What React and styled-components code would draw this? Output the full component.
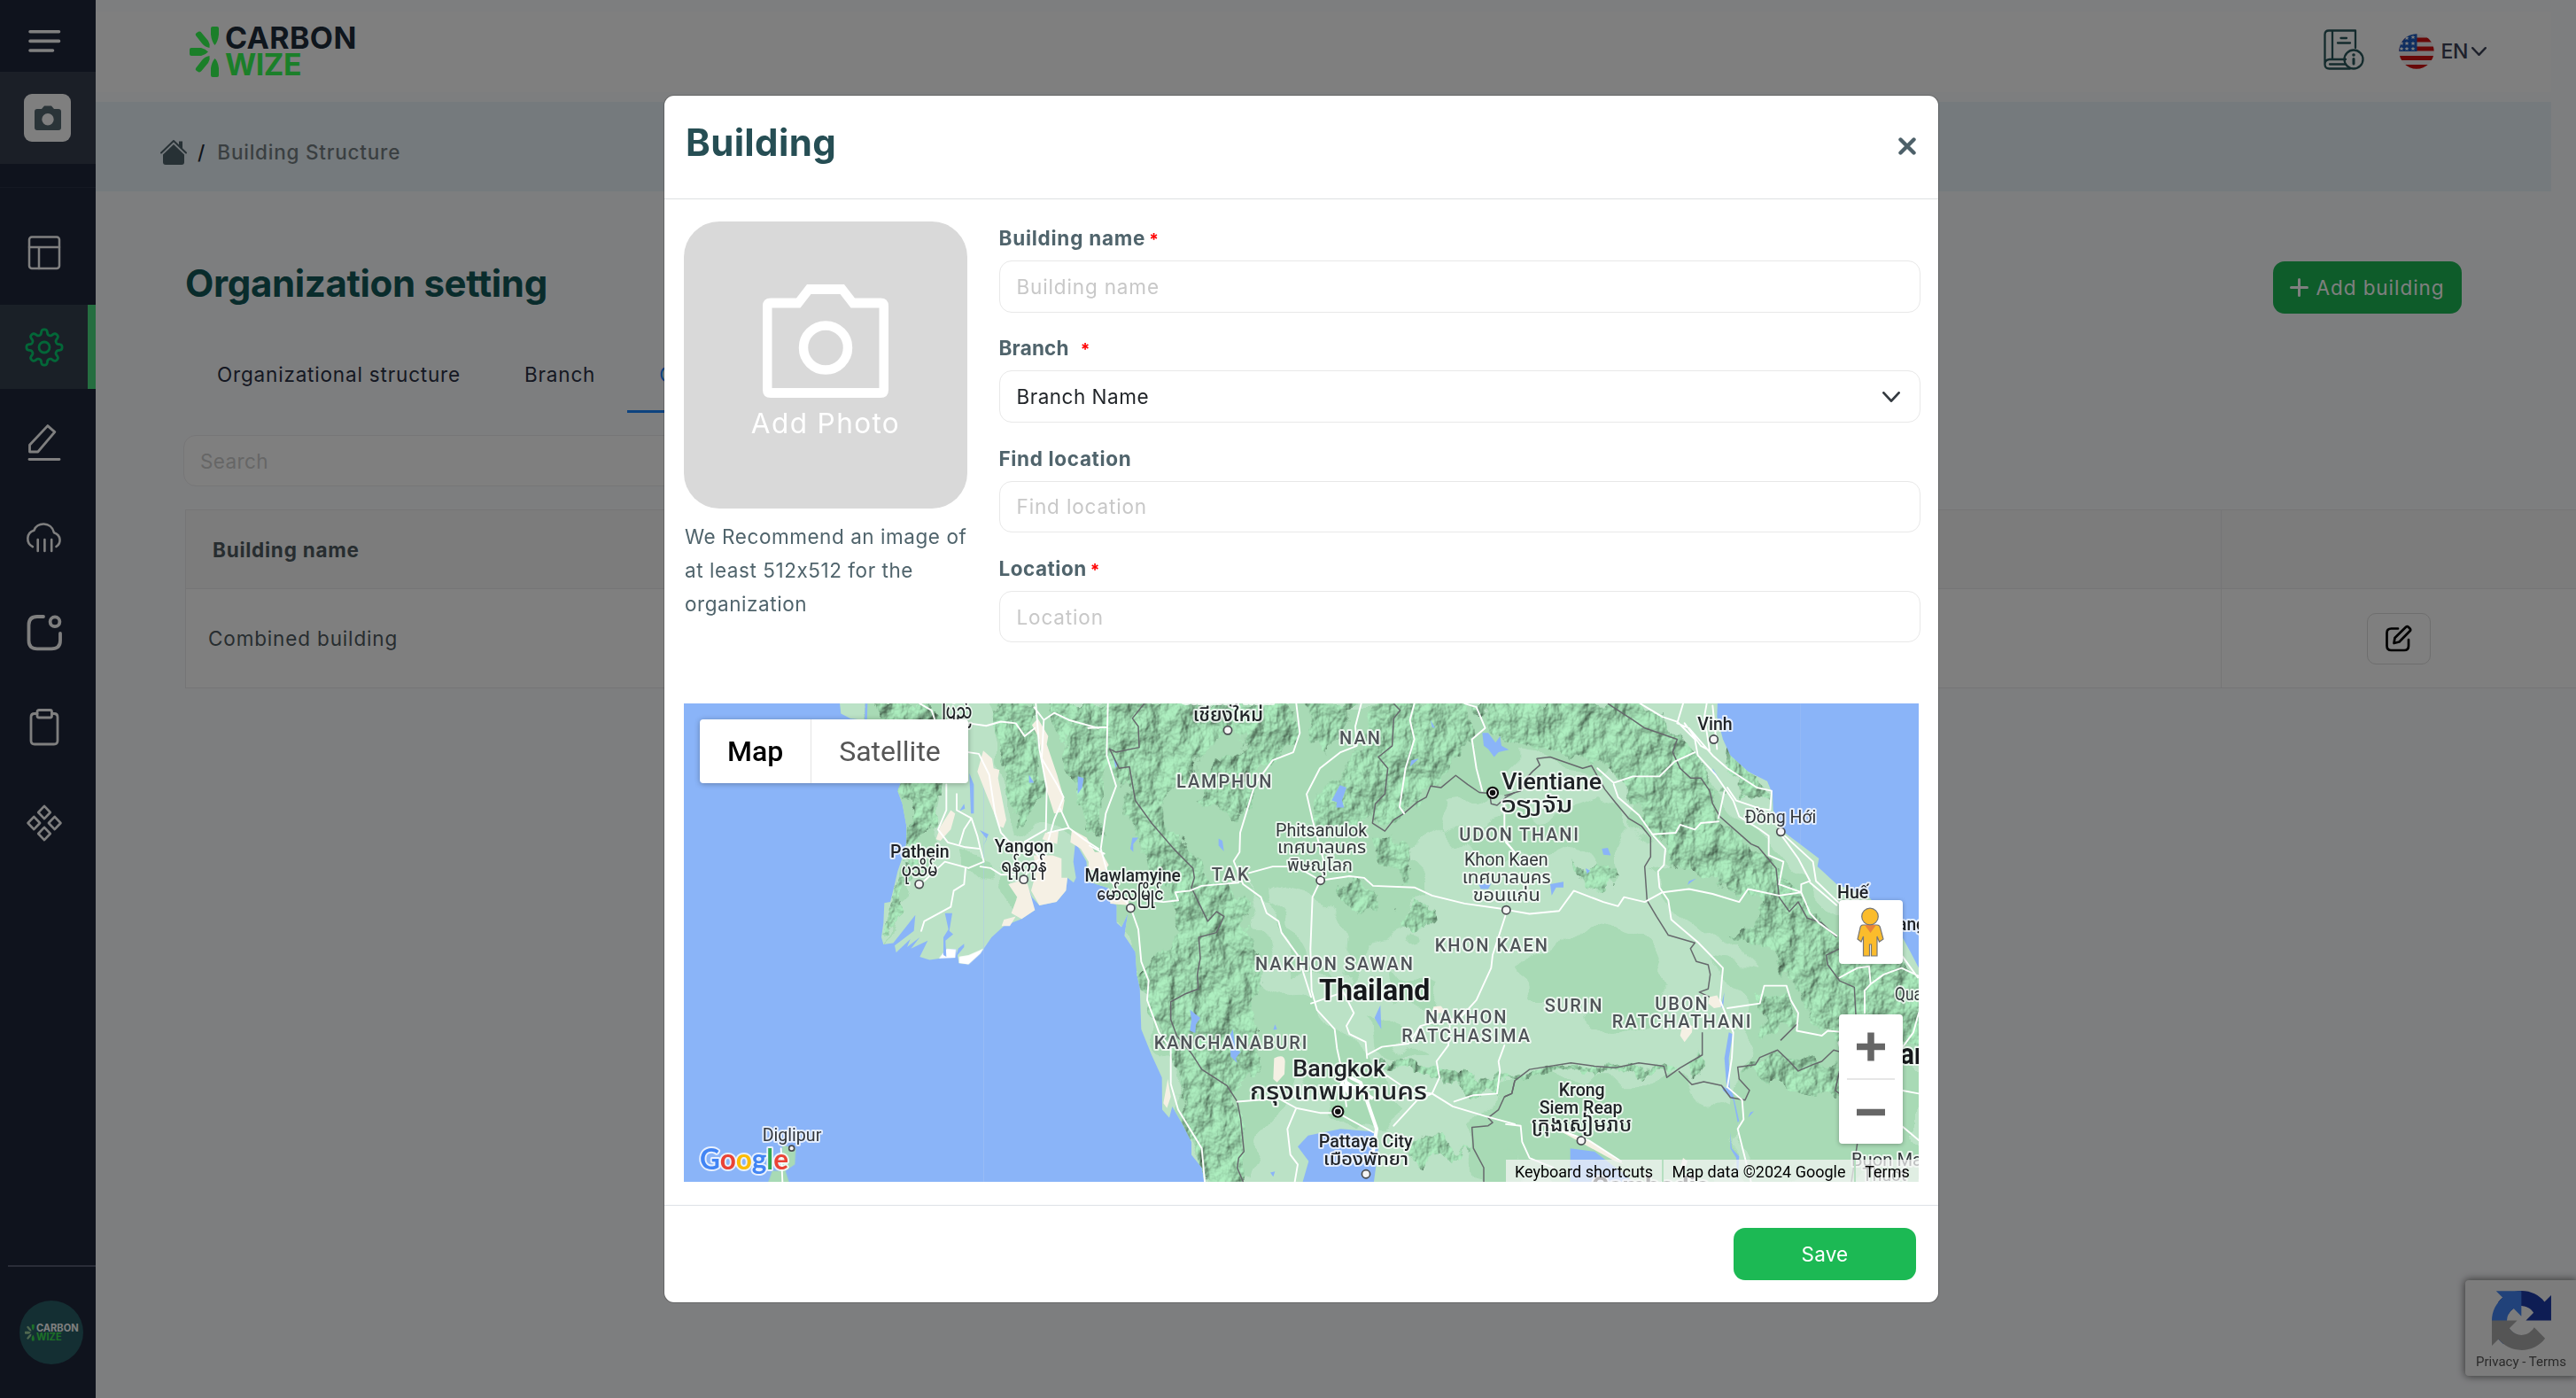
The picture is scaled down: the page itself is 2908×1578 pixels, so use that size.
import React from "react";
import styled, { createGlobalStyle } from "styled-components";

const GlobalStyle = createGlobalStyle`
  * { box-sizing: border-box; }
  html, body { margin: 0; padding: 0; }
  body { font-family: Inter, "Noto Sans", sans-serif; overflow: hidden; background: #fafbff; }
  button, input { font-family: inherit; }
`;

/* ---------- page shell ---------- */
const Shell = styled.div`
  display: flex;
  width: 2908px;
  height: 1578px;
  overflow: hidden;
  background: #fbfcff;
`;
const Sidebar = styled.aside`
  width: 108px;
  flex: none;
  background: #1f273b;
  display: flex;
  flex-direction: column;
`;
const MenuToggle = styled.div`
  height: 81px;
  padding: 22px 0 0 26px;
  color: #fff;
`;
const CompanyTile = styled.div`
  height: 104px;
  padding: 25px 0 0 27px;
  background: #373f4f;
`;
const Tile = styled.div`
  width: 53px;
  height: 54px;
  border-radius: 9px;
  background: #fff;
  display: flex;
  align-items: center;
  justify-content: center;
`;
const Nav = styled.nav`
  margin-top: 26px;
  padding-top: 25px;
  border-top: 1px solid #2b3347;
  display: flex;
  flex-direction: column;
  gap: 12.4px;
`;
const NavItem = styled.div`
  height: 95px;
  display: flex;
  align-items: center;
  padding-left: 25.5px;
  color: ${(p) => (p.$active ? "#06cf70" : "#fff")};
  background: ${(p) => (p.$active ? "#34404f" : "transparent")};
  border-right: ${(p) => (p.$active ? "9px solid #4bdc80" : "0")};
`;
const SideFoot = styled.div`
  margin: auto 0 0 9px;
  border-top: 2px solid #545a70;
  height: 150px;
  padding: 38px 0 0 13px;
`;
const Avatar = styled.div`
  width: 72px;
  height: 72px;
  border-radius: 50%;
  background: #285e66;
  padding: 27px 0 0 6px;
`;

const Main = styled.main`
  flex: 1;
  min-width: 0;
  display: flex;
  flex-direction: column;
`;
const TopBar = styled.header`
  height: 91px;
  margin: 13px 28px 0 0;
  background: #fff;
  display: flex;
  justify-content: space-between;
  padding: 17px 73px 0 106px;
`;
const LogoRow = styled.div`
  display: flex;
  gap: ${(p) => 6 * p.$s}px;
`;
const LogoWords = styled.div`
  display: flex;
  flex-direction: column;
  font-weight: 700;
  font-size: ${(p) => 34 * p.$s}px;
  line-height: ${(p) => 29.6 * p.$s}px;
  margin-top: ${(p) => (p.$s === 1 ? -2 : 0)}px;
  color: ${(p) => p.$top};
`;
const LogoLine = styled.span`
  color: ${(p) => p.$c || "inherit"};
  letter-spacing: ${(p) => p.$ls}px;
`;
const TopTools = styled.div`
  display: flex;
  align-items: flex-start;
  padding-top: 3px;
`;
const Language = styled.div`
  display: flex;
  align-items: center;
  height: 40px;
  margin: 5px 0 0 39px;
  font-size: 23px;
  font-weight: 500;
  color: #3c4257;
`;
const LangCode = styled.span`
  margin: 0 4px 0 8px;
  letter-spacing: -0.4px;
`;
const Crumbs = styled.div`
  height: 101px;
  margin: 11px 28px 0 0;
  background: #ebf5fb;
  display: flex;
  align-items: center;
  padding: 12px 0 0 73px;
  font-size: 22.5px;
  line-height: 30px;
  color: #757f83;
  font-weight: 500;
`;
const Slash = styled.span`
  color: #1f2a36;
  margin: 0 14px 0 12px;
`;
const CrumbText = styled.span`
  letter-spacing: 0.78px;
`;
const TitleRow = styled.div`
  display: flex;
  justify-content: space-between;
  align-items: flex-start;
  margin: 79px 129px 0 101px;
  height: 93px;
`;
const PageTitle = styled.h1`
  margin: 0;
  font-size: 42px;
  line-height: 50px;
  letter-spacing: -0.35px;
  font-weight: 700;
  color: #125858;
`;
const GreenButton = styled.button`
  border: 0;
  border-radius: 13px;
  background: #1cb954;
  color: #fff;
  height: 59px;
  width: ${(p) => p.$w}px;
  display: flex;
  align-items: center;
  justify-content: center;
  gap: 8px;
  padding: 0 0 1px;
  font-size: 22.5px;
  letter-spacing: ${(p) => p.$ls}px;
`;
const Tabs = styled.div`
  display: flex;
  margin-left: 101px;
  height: 78px;
`;
const Tab = styled.div`
  padding: 20px 36px 0;
  height: 78px;
  line-height: 30px;
  font-size: 22.5px;
  letter-spacing: 0.82px;
  color: ${(p) => (p.$active ? "#1a86ff" : "#2b3144")};
  border-bottom: ${(p) => (p.$active ? "3px solid #1a86ff" : "0")};
`;
const SearchBox = styled.div`
  margin: 25px 0 0 99px;
  width: 640px;
  height: 58px;
  border: 1px solid #ececef;
  border-radius: 14px;
  background: #fff;
  padding-left: 18px;
  font-size: 22.5px;
  line-height: 57px;
  letter-spacing: 0.4px;
  color: #cdcdcd;
`;
const Table = styled.div`
  margin: 26px 0 0 101px;
  display: grid;
  grid-template-columns: 2298px 1fr;
  border: 1px solid #ebebed;
  border-right: 0;
  background: #fff;
`;
const Cell = styled.div`
  height: ${(p) => (p.$head ? 89 : 111)}px;
  background: ${(p) => (p.$head ? "#f8f8f8" : "#fff")};
  border-bottom: ${(p) => (p.$head ? "1px solid #ebebed" : "0")};
  border-right: ${(p) => (p.$last ? "0" : "1px solid #ebebed")};
  padding-left: ${(p) => (p.$last ? 164 : p.$head ? 30 : 25)}px;
  display: flex;
  align-items: center;
  font-size: 22.5px;
  letter-spacing: ${(p) => (p.$head ? "0.75px" : "0.85px")};
  font-weight: ${(p) => (p.$head ? 700 : 400)};
  color: #4f5a60;
`;
const EditButton = styled.div`
  width: 72px;
  height: 58px;
  border: 1px solid #dcdcdc;
  border-radius: 10px;
  display: flex;
  align-items: center;
  justify-content: center;
`;
const Captcha = styled.div`
  position: fixed;
  right: 0;
  bottom: 25px;
  width: 125px;
  height: 108px;
  border-radius: 4px 0 0 4px;
  background: #f9f9f9;
  box-shadow: 0 0 9px 1px #777;
  display: flex;
  flex-direction: column;
  align-items: center;
  padding: 12px 0 0 1px;
  font: 15px/26px Roboto, sans-serif;
  color: #555;
  white-space: pre;
`;

/* ---------- dialog ---------- */
const Backdrop = styled.div`
  position: fixed;
  inset: 0;
  background: rgba(0, 0, 0, 0.5);
  padding: 108px 0 0 750px;
`;
const Dialog = styled.section`
  width: 1438px;
  height: 1362px;
  border-radius: 11px;
  background: #fff;
  box-shadow: 0 0 0 1px rgba(0, 0, 0, 0.2);
  display: flex;
  flex-direction: column;
`;
const DialogHead = styled.div`
  height: 117px;
  flex: none;
  border-bottom: 1px solid #dee0e2;
  display: flex;
  justify-content: space-between;
  padding: 22px 25px 0 24px;
`;
const DialogTitle = styled.h2`
  margin: 0;
  font-size: 42px;
  line-height: 62px;
  font-weight: 700;
  letter-spacing: 0.35px;
  color: #264e54;
`;
const CloseIcon = styled.svg`
  margin-top: 25px;
`;
const DialogBody = styled.div`
  flex: 1;
  padding: 25px 20.5px 0 22px;
`;
const FormGrid = styled.div`
  display: grid;
  grid-template-columns: 320px 1fr;
  column-gap: 35.5px;
  height: 544px;
`;
const PhotoDrop = styled.div`
  height: 324px;
  border-radius: 40px;
  background: #d9d9d9;
  color: #fff;
  display: flex;
  flex-direction: column;
  align-items: center;
  padding-top: 71px;
  font-size: 31.5px;
  line-height: 57px;
  letter-spacing: 1.4px;
`;
const Hint = styled.p`
  margin: 13px 0 0 1px;
  font-size: 22.5px;
  line-height: 38.2px;
  letter-spacing: 0.55px;
  color: #50646c;
  white-space: nowrap;
`;
const Field = styled.div`
  height: 124.3px;
`;
const Label = styled.div`
  height: 38px;
  line-height: 38px;
  margin-bottom: 6px;
  font-size: 22.5px;
  font-weight: 700;
  letter-spacing: ${(p) => p.$ls || 0}px;
  color: #50646c;
`;
const Star = styled.span`
  color: #f00;
  font-size: 19px;
  margin-left: ${(p) => p.$gap}px;
`;
const Control = styled.div`
  height: 58.5px;
  border: 1px solid #e8e8e8;
  border-radius: 14px;
  padding: 0 22px 0 19px;
  display: flex;
  align-items: center;
  justify-content: space-between;
  font-size: 22.5px;
  letter-spacing: ${(p) => (p.$filled ? 0.5 : 0.85)}px;
  color: ${(p) => (p.$filled ? "#212529" : "#c8c8c8")};
`;
const DialogFoot = styled.div`
  height: 110px;
  border-top: 1px solid #dee2e6;
  display: flex;
  justify-content: flex-end;
  padding: 25px 25px 0;
`;

/* ---------- map ---------- */
const MapBox = styled.div`
  position: relative;
  width: 1394px;
  height: 540px;
  overflow: hidden;
  background: #8ab4f8;
  font-family: Roboto, sans-serif;
`;
const MapSvg = styled.svg`
  display: block;
`;
const TypeSwitch = styled.div`
  position: absolute;
  left: 18px;
  top: 18px;
  display: flex;
  height: 72px;
  border-radius: 4px;
  background: #fff;
  box-shadow: 0 1px 6px rgba(0, 0, 0, 0.3);
`;
const TypeOption = styled.div`
  width: ${(p) => p.$w}px;
  line-height: 72px;
  text-align: center;
  font-size: 32px;
  font-weight: ${(p) => (p.$on ? 500 : 400)};
  color: ${(p) => (p.$on ? "#000" : "#565656")};
  border-right: ${(p) => (p.$on ? "1px solid #e4e4e4" : "0")};
`;
const Pegman = styled.div`
  position: absolute;
  left: 1304px;
  top: 222px;
  width: 72px;
  height: 72px;
  border-radius: 4px;
  background: #fff;
  box-shadow: 0 1px 5px rgba(0, 0, 0, 0.3);
`;
const ZoomPad = styled.div`
  position: absolute;
  left: 1304px;
  top: 351px;
  width: 72px;
  height: 146px;
  border-radius: 4px;
  background: #fff;
  box-shadow: 0 1px 5px rgba(0, 0, 0, 0.3);
`;
const Attribution = styled.div`
  position: absolute;
  right: 0;
  bottom: 0;
  height: 25px;
  width: 466px;
  display: flex;
  background: rgba(245, 245, 245, 0.72);
  font-size: 18px;
  line-height: 28px;
  color: #000;
  white-space: nowrap;
`;
const Credit = styled.span`
  width: ${(p) => p.$w}px;
  text-align: center;
  border-right: ${(p) => (p.$end ? "0" : "2px solid #b5dfc0")};
`;

/* ---------- icons ---------- */
const Icon48 = ({ w = 3, children }) => (
  <svg width="48" height="48" viewBox="0 0 48 48" fill="none" stroke="currentColor" strokeWidth={w} strokeLinecap="round" strokeLinejoin="round">
    {children}
  </svg>
);

const gearPath = (() => {
  const pts = [];
  for (let i = 0; i < 240; i += 1) {
    const t = (i / 240) * Math.PI * 2;
    const r = 17.3 + 2.9 * Math.tanh(1.9 * Math.cos(8 * t));
    pts.push(`${(24 + r * Math.sin(t)).toFixed(2)} ${(24 - r * Math.cos(t)).toFixed(2)}`);
  }
  return `M${pts.join("L")}Z`;
})();

const diamond = (x, y) => `M${x} ${y - 7.2}L${x + 6.8} ${y}L${x} ${y + 7.2}L${x - 6.8} ${y}Z`;

const navIcons = [
  <Icon48 w={2.5}><rect x="7" y="6.5" width="34" height="35.5" rx="3" /><path d="M7 18H41M18 18V42" /></Icon48>,
  <Icon48 w={2.8}><path d={gearPath} /><circle cx="24" cy="24" r="6" /></Icon48>,
  <Icon48 w={2.8}><path d="M27.8 5.6L35.8 12.6L16.8 35H7.5V27.2Z" /><path d="M7 43.5H41" /></Icon48>,
  <Icon48 w={2.6}><path d="M10.9 34.2C3 30 3.5 18.500 12.3 15.800C15 6 32 5.500 35 18.200C43 21 43.500 30 37.5 34M16.700 26V39M24.400 26V39M32.200 26V39" /></Icon48>,
  <Icon48 w={3.8}><path d="M23 6H16C9.500 6 6.500 9 6.500 15.500V33C6.500 39 9.500 42.300 16 42.300H32C39 42.300 42 39 42 33V25" /><circle cx="36" cy="11.800" r="5.400" /></Icon48>,
  <Icon48 w={2.8}><path d="M16 8.500H13C10.500 8.500 9 10 9 12.500V39C9 41.500 10.500 43 13 43H35C37.500 43 39 41.500 39 39V12.500C39 10 37.500 8.500 35 8.500H32.500" /><rect x="16" y="4.500" width="16.500" height="8.500" rx="2" /></Icon48>,
  <Icon48 w={2.6}><path d={diamond(24, 12)} /><path d={diamond(12.3, 24)} /><path d={diamond(35.7, 24)} /><path d={diamond(24, 36)} /></Icon48>,
];

const Burst = ({ s = 1, a, b }) => (
  <svg width={34 * s} height={57 * s} viewBox="0 0 34 57">
    <g fill={a}>
      <path d="M0 26Q0 24 2 24H13Q18 25 21 28.500Q18 32 13 33H2Q0 33 0 31Z" />
      <path d="M7 10Q6 8 8 7L10 5.800Q12 5 13.500 7L21 16Q23.500 20 22.500 24Q17 23 14 19Z" />
      <path d="M7 47Q6 49 8 50L10 51.200Q12 52 13.500 50L21 41Q23.500 37 22.500 33Q17 34 14 38Z" />
    </g>
    <g fill={b}>
      <path d="M24 2Q24 0 26 0H31Q33 0 33 2V9Q32 17 28.500 21Q25 17 24 9Z" />
      <path d="M24 55Q24 57 26 57H31Q33 57 33 55V47Q32 39 28.500 36Q25 40 24 47Z" />
    </g>
  </svg>
);

const Logo = ({ s, top, a, b, ls, ls2 }) => (
  <LogoRow $s={s}>
    <Burst s={s} a={a} b={b} />
    <LogoWords $s={s} $top={top}>
      <LogoLine $ls={ls}>CARBON</LogoLine>
      <LogoLine $c={b} $ls={ls2}>WIZE</LogoLine>
    </LogoWords>
  </LogoRow>
);

const SmallCamera = () => (
  <svg width="30" height="28" viewBox="0 0 30 28">
    <path fill="#546870" fillRule="evenodd" d="M3 4H8L11 0.500H19L22 4H27Q30 4 30 7V25Q30 28 27 28H3Q0 28 0 25V7Q0 4 3 4ZM15 9A6.700 6.700 0 1 0 15 22.400A6.700 6.700 0 1 0 15 9Z" />
  </svg>
);

const BigCamera = () => (
  <svg width="142" height="128" viewBox="0 0 142 128">
    <path fill="#fff" fillRule="evenodd" d="M9 15.500H38L50 0H92L104 15.500H133Q142 15.500 142 24.500V119Q142 128 133 128H9Q0 128 0 119V24.500Q0 15.500 9 15.500ZM10.500 26.500V117H131.500V26.500H99.500L87.500 11H54.500L42.500 26.500Z" />
    <circle cx="71" cy="71.500" r="25" fill="none" stroke="#fff" strokeWidth="10.500" />
  </svg>
);

const House = () => (
  <svg width="30" height="29" viewBox="0 0 30 29">
    <path d="M1 15.500L15 2L29 15.500" fill="none" stroke="#4f626a" strokeWidth="2" strokeLinecap="round" strokeLinejoin="round" />
    <path d="M21 2.500H25V11L21 7Z" fill="#4f626a" />
    <path d="M15 6L27 17.500V26Q27 29 24 29H6Q3 29 3 26V17.500Z" fill="#4f626a" />
  </svg>
);

const Manual = () => (
  <svg width="46" height="46" viewBox="0 0 46 46" fill="none" stroke="#28565a" strokeWidth="2.300" strokeLinejoin="round" strokeLinecap="round">
    <path d="M36 21V1.500H6Q1.500 1.500 1.500 6V40M10 1.500V34M25 34H6.500Q1.500 34.500 1.500 39.500Q1.500 44.500 6.500 44.500H30M7 39.500H25M19.500 10H26M16 15.500H30" />
    <circle cx="34" cy="34" r="10.500" />
    <path d="M34 33.500V39" strokeWidth="3" />
    <circle cx="34" cy="29" r="0.800" strokeWidth="2" />
  </svg>
);

const Flag = () => (
  <svg width="40" height="40" viewBox="0 0 40 40">
    <clipPath id="flagDisc"><circle cx="20" cy="20" r="19.700" /></clipPath>
    <g clipPath="url(#flagDisc)">
      <rect width="40" height="40" fill="#f4f0f2" />
      {[4.5, 14.5, 25, 35].map((y) => <rect key={y} y={y} width="40" height="5" fill="#d01010" />)}
      <rect width="20.500" height="20" fill="#1f5cc0" />
      {[[9, 5], [16, 4], [3, 11], [9, 11], [16, 11], [3, 17], [9, 17], [16, 17]].map(([x, y]) => (
        <path key={`${x}-${y}`} fill="#fff" transform={`translate(${x} ${y})`} d="M0-2.600L.7-.8L2.500-.8L1.100.4L1.600 2.200L0 1.100L-1.600 2.200L-1.100.4L-2.500-.8L-.7-.8Z" />
      ))}
    </g>
  </svg>
);

const Chevron = ({ w, h, sw, c }) => (
  <svg width={w} height={h} viewBox={`0 0 ${w} ${h}`} fill="none" stroke={c} strokeWidth={sw} strokeLinecap="round" strokeLinejoin="round">
    <path d={`M${sw / 2} ${sw / 2}L${w / 2} ${h - sw / 2}L${w - sw / 2} ${sw / 2}`} />
  </svg>
);

const EditIcon = () => (
  <svg width="30" height="31" viewBox="0 0 30 31" fill="none" stroke="#000" strokeWidth="2.700" strokeLinecap="round" strokeLinejoin="round">
    <path d="M14 4.500H6.500Q1.500 4.500 1.500 9.500V24Q1.500 29 6.500 29H21Q26 29 26 24V17" />
    <path d="M9.500 21L10.500 15L23 2.800Q24.500 1.500 26 3L27.500 4.500Q28.800 6 27.500 7.300L15.500 19.500Z" />
  </svg>
);

const RecaptchaLogo = () => (
  <svg width="67" height="67" viewBox="0 0 64 64">
    <path fill="#1c3aa9" d="M64 31.955l-.033-1.370V4.687l-7.160 7.160C50.948 4.674 42.033.093 32.050.093c-10.400 0-19.622 4.960-25.458 12.640l11.736 11.860a15.550 15.550 0 0 1 4.754-5.334c2.050-1.600 4.952-2.906 8.968-2.906.485 0 .860.057 1.135.163 4.976.393 9.288 3.140 11.828 7.124l-8.307 8.307L64 31.953" />
    <path fill="#4285f4" d="M31.862.094l-1.370.033H4.594l7.160 7.160C4.580 13.147 0 22.060 0 32.046c0 10.400 4.960 19.622 12.640 25.458L24.500 45.768a15.550 15.550 0 0 1-5.334-4.754c-1.600-2.050-2.906-4.952-2.906-8.968 0-.485.057-.860.163-1.135.393-4.976 3.140-9.288 7.124-11.828l8.307 8.307L31.860.095" />
    <path fill="#ababab" d="M.001 32.045l.033 1.370v25.898l7.160-7.160c5.860 7.173 14.774 11.754 24.760 11.754 10.400 0 19.622-4.960 25.458-12.640l-11.736-11.860a15.550 15.550 0 0 1-4.754 5.334c-2.050 1.600-4.952 2.906-8.968 2.906-.485 0-.860-.057-1.135-.163-4.976-.393-9.288-3.140-11.828-7.124l8.307-8.307L0 32.050" />
  </svg>
);

/* The map is drawn as three tiles, west to east, that share one vertical scale. */
const TILE_X = { a: 760, b: 1230, c: 1700 };
const K = 2.751;
const tile = (t) => `translate(${TILE_X[t]} 780) scale(0.33333 ${1 / K})`;

const land = {
  a: "M563 30L568 70L600 85L690 95L770 286L760 310L776 350L790 420L790 470L775 520L760 560L750 600L735 655L715 658L712 720L705 765L712 787L745 783L820 695L815 745L750 790L755 812L803 770L792 795L835 765L805 800L862 775L835 825L868 835L905 830L920 800L958 802L968 845L1000 849L1040 815L1078 765L1120 730L1180 708L1225 680L1200 640L1196 600L1215 640L1240 666L1298 655L1330 620L1335 580L1356 595L1364 580L1355 530L1362 470L1400 530L1408 580L1450 605V30Z",
  b: "M-10 30V590L65 612L70 655L92 665L92 720L108 733L130 690L118 760L155 810L160 880L170 920L175 1050L210 1130L245 1200L246 1300L270 1325L280 1290L315 1345L345 1400L345 1440L380 1480L390 1530H720L742 1460L705 1415L740 1380L850 1360L960 1368L978 1420L962 1530H1450V30Z",
  c: "M-10 30H717L715 80L735 150L760 200L820 250L885 280L903 320L905 370L945 440L1060 520L1055 545L1120 600L1230 640L1340 760L1370 810L1398 860V1530H-10Z",
};
const hills = {
  a: "M670 30H870L905 110L915 290L890 400L840 450L800 500L790 580L770 670L735 745L720 745L755 600L785 530L800 440L785 330L750 200L700 90Z M1095 30H1215L1230 200L1250 330L1215 360L1190 420L1150 420L1130 250L1100 130Z M1285 30H1450V480L1400 430L1375 340L1330 230L1310 130Z",
  b: "M-10 30H680L700 130L640 200L570 230L550 300L500 400L440 390L380 330L420 230L500 190L520 100L400 170L370 220L250 330L260 430L330 480L400 580L470 600L520 660L550 800L580 900L560 1010L590 1130L540 1200L490 1250L520 1340L530 1530H400L350 1390L300 1270L280 1130L240 1050L190 960L180 860L260 800L320 740L280 640L180 500L140 360L60 200L30 330L-10 380Z M740 30H890L870 130L800 200L750 160Z M960 30H1290L1290 130L1220 240L1130 320L1060 370L1000 420L950 400L860 420L790 440L760 400L780 320L850 250L910 190Z M1310 30H1450V170L1390 150L1340 90Z M840 580L920 610L980 640L950 690L900 660L860 620Z M1080 650L1160 680L1170 735L1100 740L1040 710Z M960 1140L1100 1150L1240 1200L1360 1210L1430 1200L1390 1250L1240 1230L1120 1200L980 1170Z M1100 1380L1200 1390L1270 1430L1170 1440L1120 1490L1080 1460Z M960 450H1080L1090 500L1040 600L970 510Z",
  c: "M-10 30H460L560 100L610 160L670 230L725 310L715 390L790 450L860 500L920 550L990 630L1050 690L1130 750L1330 800L1398 900V1110L1250 1090L1130 1080L1050 1030L1020 940L960 880L870 790L760 760L860 700L890 650L700 590L570 530L520 450L410 310L300 220L150 170L60 180L-10 160Z M970 650L1120 790V890L1010 840L950 760Z M770 150L830 250L895 315V340L800 330L745 230Z M860 940L950 940L980 1030L930 1070L870 1060Z M-10 1195L150 1170L530 1165L570 1180L540 1190L200 1188L-10 1210Z M620 1150L655 1090L680 1170L640 1190Z M800 1170L910 1125L1130 1155V1270L1000 1250L890 1210Z M220 520L280 560L380 565L390 595L290 610L240 570Z",
};
const mids = {
  a: "M1070 30L1140 430L1240 460L1340 400L1440 500V30Z M1060 560L1120 570L1170 620L1130 680L1070 600Z M990 520L1050 530L1030 580L985 570Z M880 790L910 800L890 835L860 830Z M640 30L800 520L740 780L890 500L940 200L910 30Z",
  b: "M-10 30V580L90 640L200 950L300 1300L400 1530H560L620 1340L740 1200L860 1340L920 1370L1040 1280L940 1140L760 1020L600 900L540 600L620 640L720 820L860 900L960 780L1080 740L1180 620L1060 480L1240 440L1450 380V30Z M600 600L780 640L900 760L870 880L700 900L640 760Z M1180 340L1450 320V520L1260 500Z M1040 880L1200 920L1180 1000L1060 980Z M1300 1350L1450 1200V1530H1340Z M940 1000L1060 1080L1100 1120L960 1110Z",
  c: "M-10 330L60 380L330 330L460 430L400 560L240 480L100 540L-10 460Z M60 850L280 720L480 780L560 900L460 1020L330 1080L240 960L90 960Z M480 560L700 620L860 640L820 760L700 780L560 680Z M700 820L1130 880V1530H820L760 1280L820 1100Z M-10 1200H520L640 1230L780 1290L760 1530H300L130 1500L-10 1420Z M420 30L1130 700L1398 860V1530H1130L900 900L520 540L380 250L-10 180V30Z M590 620L720 640L700 720L620 700Z",
};
const roads = {
  a: "M835 39L875 60L890 100M1000 100L1060 108L1110 95L1160 100L1190 140L1225 115M1228 39L1240 180L1265 300L1262 430L1190 468M1222 50L1255 90L1248 210L1300 290L1322 330L1290 400L1270 465M1255 90L1290 68L1340 90L1440 115M1000 190L1035 195L1070 260L1090 380L1110 440L1140 470M925 290L925 370L897 430L930 470L990 485L1040 490L1052 530L1000 550L920 530L850 590M960 320L960 370L1010 395L1030 450L1040 490M1010 395L985 430L970 475M990 550L985 600L950 620L940 670L900 690L850 715L840 745M1040 545L1075 550L1110 570L1160 570M1190 580L1210 540L1245 520L1190 468M1310 365L1340 425L1270 440M1340 425L1390 460L1440 490M365 1420L370 1524",
  b: "M62 39L58 200L90 295L55 380L38 490M-5 115L58 112M38 490L65 580L140 675M0 480L50 505M700 39L712 130L690 190L620 215L560 290L530 380L510 440L508 500L488 528L520 600L580 640L600 690L640 715L650 750L705 820L750 950M920 39L900 110L905 170L850 190L780 240L735 320L755 400L800 550L782 588M782 588L755 640L748 800L752 930L770 990L830 1050L838 1110L850 1160L870 1290M782 588L880 575L930 580L960 605L1100 610L1160 635L1270 660L1411 678M540 565L620 545L700 545L782 588M505 595L380 605L340 620L290 625L300 650L250 655L200 650M140 675L165 740L175 840L200 900L195 960L235 1060L275 1110L275 1220L300 1300L380 1420L390 1524M1100 39L1085 90L1100 150L1070 240L1050 360L1065 380M1270 39L1310 50L1340 115L1295 150L1310 240L1330 310M1405 340L1405 460L1430 490M1411 690L1365 820L1360 860L1310 960L1250 1020M1220 1040L1215 1100L1175 1150L1185 1200L1160 1250M750 970L860 935L895 1000L870 1040L880 1065L935 1090L940 1140M940 1130L990 1105L1080 1095L1120 1040L1200 1020L1240 1020M1160 1250L1110 1270L1030 1350M1160 1250L1230 1290L1340 1320L1440 1345M1405 1100L1385 1150L1390 1180L1380 1250L1300 1255L1235 1275M500 1275L640 1265L700 1295L780 1310L840 1310L960 1370M700 1295L670 1360L680 1440L705 1470L695 1524M1000 1190L1080 1240L1160 1250",
  c: "M455 39L530 80L580 95L640 150L650 200L710 260L770 340L790 390L860 430L890 450L890 510L940 530L925 600L1000 625L1030 690L1060 720L1120 760M600 39L580 100L620 115L700 200L750 240L850 300L900 310L895 370L860 365L780 340L750 300M680 39L672 80L690 185M720 395L740 310M605 100L660 170L690 185M495 445L575 440L590 415L640 430L660 410L720 405M365 285L430 265L520 265L570 220L640 190M365 285L310 240M365 290L380 330L450 385L500 450L540 490L535 540L515 560L520 610L550 650L560 710L650 780L735 860L725 960L770 1060L765 1140L750 1230L800 1270L805 1330L785 1360L830 1524M5 680L80 692L180 683L230 620L330 655L380 668L400 640L470 655L530 625L620 615L700 630L790 655L820 615L925 635L1000 625L1000 600L1030 590L990 520L935 450M945 450L1040 530L1050 590L1130 660M1030 595L1120 665M700 45L715 180M0 470L30 500L20 540M750 985L860 970L875 915L950 915L965 960L990 1000L985 1055L1070 1070L1090 1055L1130 1058M1130 890L1190 860L1230 855L1235 910L1280 880L1340 860L1398 885M1215 1000V930L1235 910M0 1345L50 1350L55 1400L80 1450L160 1480M110 1340L200 1370L280 1395L390 1460M1340 820L1395 890M1340 1240L1398 1250M1340 1350L1398 1395M1398 1000L1380 1060L1340 1110",
};
const borders = {
  b: "M185 39L145 85L165 110L168 175L90 190L68 180L100 240L135 235L155 340L210 410L285 490L350 550L355 580L345 610L400 715L430 685L455 700L430 750L370 765L375 830L365 880L368 925L325 940L275 965L275 1020L295 1070L345 1125L380 1175L465 1225L500 1275L512 1330L523 1430L505 1450L500 1480L520 1524M1030 39L1052 60L1030 85L1025 170L978 205L1010 240L1000 320L968 350L958 410L1000 435L1030 400L1065 380L1110 345L1140 330L1155 295L1190 300L1240 262L1280 290L1320 315L1355 318L1360 350L1380 355L1410 330L1440 315M1440 1210L1430 1250L1405 1260L1385 1300L1350 1325L1365 1340L1350 1350L1295 1355L1300 1420L1335 1480L1335 1524",
  c: "M345 39L380 60L430 90L470 115L580 150L565 190L590 240L625 270L660 270L690 310L700 350L725 390L830 475L855 485L915 550L925 640L960 685L990 655L1020 705L1070 720L1120 765M90 250L115 230L105 210L150 205L260 240L290 232L335 305L370 345L415 395L460 420L490 455L490 515L470 545L478 650L510 700L550 758L640 782L625 800L645 840L685 850L692 880L685 925L655 935L690 950M665 1060L665 1130L590 1170L545 1200L535 1165L450 1155L370 1170L300 1165L220 1155L80 1175L30 1210L20 1250L-5 1260M585 1180L630 1222L670 1213L730 1225L760 1262L810 1270L825 1240L790 1205L785 1168L845 1160L860 1138L920 1115L960 1150L990 1180L1040 1160L1070 1150L1110 1115L1130 1120M1130 800L1085 820L1090 850L1130 900L1180 920L1185 1004M1130 1180L1115 1240L1130 1250M-5 325L50 310L70 270L90 250M930 1085L990 1030M1190 1406L1170 1524",
};
const sand = {
  a: "M1050 185L1080 210L1085 240L1105 245L1100 270L1128 400L1118 425L1105 420L1060 320L1030 250ZM940 370L955 380L940 430L905 465L890 460L905 420ZM1235 85L1270 140L1265 165L1300 260L1325 340L1318 375L1290 380L1262 300L1240 150L1215 105ZM1170 590L1200 600L1225 680L1180 708L1145 690L1165 640L1135 600ZM1220 510H1285L1315 520V580L1335 580L1330 620L1298 655L1240 666L1212 620L1230 560ZM1350 430L1400 455L1440 520V580L1380 490L1345 470ZM1120 710L1160 700L1140 730H1112ZM1260 440L1305 435L1300 475L1250 460Z",
  b: "M0 500L40 500L65 540L50 560L-5 555ZM625 1140Q660 1125 662 1150L660 1190L635 1215L622 1205ZM265 1205L275 1260L262 1295L250 1280ZM1165 980L1190 978L1210 1000H1160ZM70 640L135 645L130 665L70 660Z",
  c: "M690 950L715 945L735 980L705 985L685 970ZM600 1030L632 1040L630 1060L605 1090L590 1070ZM110 1330L290 1400L400 1470L370 1460L200 1375ZM600 1450L615 1460L600 1500L590 1480Z",
};
const lakes = {
  a: "M1205 260L1222 285H1205ZM1370 265L1390 270L1385 300L1370 320ZM1003 255L1018 290L1018 380H1008ZM985 350L970 372L988 365ZM650 39L658 39L656 100L648 100ZM1038 432L1068 445L1050 480L1062 460ZM920 690L945 690L935 745L948 755L922 775L925 825L915 820L915 765L932 740ZM985 785L965 800L958 825L985 795Z",
  b: "M848 292L870 300L855 340L862 362H835L838 345L820 340ZM1330 130L1350 130L1375 160L1390 140L1395 170L1420 182L1385 190L1370 205L1350 180L1335 170ZM1115 210L1085 235L1090 215ZM437 458L450 465L455 498L437 480ZM145 455L165 455L148 475V500L138 490ZM340 990L375 1015L360 1035L358 1062L340 1055L345 1020ZM985 975L988 1050L965 1015ZM485 1050L495 1115L512 1120L495 1140L500 1155L478 1135L475 1070ZM628 1035L635 1050L622 1052ZM612 1495L628 1492L622 1508ZM80 200L95 225L88 240ZM1155 90L1170 115L1160 112ZM1318 600L1360 598L1350 615H1325Z",
  c: "M325 490L345 487L355 510L330 508ZM150 600L195 592L195 610L170 610L155 635ZM218 1420L300 1430L400 1500L430 1524H218ZM645 582L615 602L620 590ZM740 935L735 985L728 980ZM755 1060L768 1065L755 1140L758 1230L770 1255L790 1335L785 1340L770 1270L735 1240L732 1225L748 1235L740 1140ZM760 1370L765 1420L790 1445L785 1524L780 1450L760 1420ZM840 1305L820 1325L828 1308ZM270 550L285 558L275 568ZM700 240L725 275L700 250Z",
};

/* tile, centre x, baseline, drawn width, font size, kind, text */
const labels = [
  ["a", 961, 84, 102, 24, "city", "ပြည်"],
  ["a", 835, 517, 200, 20, "city", "Pathein"],
  ["a", 834, 575, 122, 20, "city", "ပုသိမ်"],
  ["a", 1188, 502, 200, 20.5, "city", "Yangon"],
  ["a", 1188, 562, 154, 20, "city", "ရန်ကုန်"],
  ["a", 402, 1397, 200, 20, "town", "Diglipur"],
  ["b", 146, 592, 325, 20, "city", "Mawlamyine"],
  ["b", 138, 650, 226, 20, "city", "မော်လမြိုင်"],
  ["b", 466, 39, 320, 20, "city", "Chiang Mai"],
  ["b", 469, 93, 238, 21, "city", "เชียงใหม่"],
  ["b", 915, 166, 138, 20, "area", "NAN"],
  ["b", 455, 299, 322, 20, "area", "LAMPHUN"],
  ["b", 785, 451, 310, 20, "town", "Phitsanulok"],
  ["b", 786, 504, 300, 20, "town", "เทศบาลนคร"],
  ["b", 780, 558, 222, 20, "town", "พิษณุโลก"],
  ["b", 476, 589, 126, 20, "area", "TAK"],
  ["b", 828, 867, 534, 20, "area", "NAKHON SAWAN"],
  ["b", 965, 961, 376, 33, "big", "Thailand"],
  ["b", 477, 1112, 518, 20, "area", "KANCHANABURI"],
  ["b", 1274, 1033, 274, 20, "area", "NAKHON"],
  ["b", 1274, 1089, 434, 20, "area", "RATCHASIMA"],
  ["b", 845, 1196, 314, 26, "city", "Bangkok"],
  ["b", 843, 1268, 600, 26, "city", "กรุงเทพมหานคร"],
  ["b", 935, 1418, 318, 20, "city", "Pattaya City"],
  ["b", 936, 1471, 288, 20, "city", "เมืองพัทยา"],
  ["c", 155, 305, 338, 26, "city", "Vientiane"],
  ["c", 105, 376, 242, 25, "city", "ວຽງຈັນ"],
  ["c", 44, 464, 404, 20, "area", "UDON THANI"],
  ["c", 1, 543, 284, 20, "town", "Khon Kaen"],
  ["c", 2, 597, 300, 20, "town", "เทศบาลนคร"],
  ["c", 2, 651, 228, 20, "town", "ขอนแก่น"],
  ["c", -50, 808, 382, 20, "area", "KHON KAEN"],
  ["c", 708, 122, 118, 20, "city", "Vinh"],
  ["c", 930, 409, 242, 20, "town", "Đồng Hới"],
  ["c", 1175, 643, 106, 21, "city", "Huế"],
  ["c", 1312, 742, 220, 20, "city", "Da Nang"],
  ["c", 1452, 959, 270, 20, "town", "Quang Ngai"],
  ["c", 228, 996, 194, 20, "area", "SURIN"],
  ["c", 594, 991, 178, 20, "area", "UBON"],
  ["c", 594, 1046, 470, 20, "area", "RATCHATHANI"],
  ["c", 257, 1258, 156, 20, "city", "Krong"],
  ["c", 254, 1313, 282, 20, "city", "Siem Reap"],
  ["c", 257, 1367, 340, 22, "city", "ក្រុងសៀមរាប"],
  ["c", 1294, 1157, 330, 33, "big", "Vietnam"],
  ["c", 1290, 1475, 240, 20, "town", "Buon Ma"],
  ["c", 1282, 1522, 150, 20, "town", "Thuot"],
  ["c", 490, 1566, 400, 30, "big", "Cambodia"],
];
const fills = { city: "#1f2226", town: "#33373b", area: "#4f5358", big: "#16181b" };
const weights = { city: 500, town: 400, area: 500, big: 700 };

const towns = [["a", 833, 600], ["a", 1187, 585], ["a", 401, 1420], ["b", 468, 122], ["b", 139, 674], ["b", 782, 588], ["b", 936, 1500], ["c", 1, 680], ["c", 704, 150], ["c", 931, 437], ["c", 255, 1396]];
const capitals = [["b", 1365, 316], ["b", 841, 1306]];
const px = (t, x) => TILE_X[t] + x / 3;
const py = (y) => 780 + y / K;

const MapLabel = ({ d: [t, x, y, w, size, kind, text] }) => (
  <text
    x={px(t, x)}
    y={py(y)}
    textAnchor="middle"
    textLength={w / 3}
    lengthAdjust={kind === "area" ? "spacing" : "spacingAndGlyphs"}
    fontSize={size}
    fontWeight={weights[kind]}
    fill={fills[kind]}
    stroke="#fff"
    strokeOpacity="0.75"
    strokeWidth="4"
    strokeLinejoin="round"
    paintOrder="stroke"
    fontFamily='Roboto, "Noto Sans Thai", "Noto Sans Myanmar", "Noto Sans Khmer", "Noto Sans Lao", "Noto Sans", "DejaVu Sans", sans-serif'
  >
    {text}
  </text>
);

const TileLayer = ({ data, ...rest }) =>
  Object.keys(data).map((t) => <path key={t} d={data[t]} transform={tile(t)} vectorEffect="non-scaling-stroke" {...rest} />);

const Terrain = () => (
  <MapSvg width="1394" height="540" viewBox="772 794 1394 540">
    <defs>
      <filter id="relief" filterUnits="userSpaceOnUse" x="772" y="794" width="1394" height="540" colorInterpolationFilters="sRGB">
        <feTurbulence type="fractalNoise" baseFrequency="0.04 0.03" numOctaves="5" seed="7" result="n" />
        <feDiffuseLighting in="n" surfaceScale="5.5" diffuseConstant="1.07" lightingColor="#a3e0b4" result="lit">
          <feDistantLight azimuth="225" elevation="62" />
        </feDiffuseLighting>
        <feDisplacementMap in="SourceGraphic" in2="n" scale="34" xChannelSelector="R" yChannelSelector="G" result="edge" />
        <feComposite in="lit" in2="edge" operator="in" />
      </filter>
      <filter id="patch" filterUnits="userSpaceOnUse" x="772" y="794" width="1394" height="540">
        <feTurbulence type="fractalNoise" baseFrequency="0.02" numOctaves="2" seed="3" result="n" />
        <feDisplacementMap in="SourceGraphic" in2="n" scale="60" xChannelSelector="R" yChannelSelector="G" />
      </filter>
      <clipPath id="coast">
        {Object.keys(land).map((t) => <path key={t} d={land[t]} transform={tile(t)} />)}
      </clipPath>
    </defs>
    <rect x="772" y="794" width="1394" height="540" fill="#8ab4f8" />
    <TileLayer data={land} fill="#bbe2c6" />
    <g clipPath="url(#coast)">
      <g filter="url(#patch)"><TileLayer data={mids} fill="#a8dab5" /></g>
      <g filter="url(#relief)"><TileLayer data={hills} fill="#94d2a5" /></g>
    </g>
    <g transform={tile("a")}>
      <path d="M900 830L925 800L958 802L955 828Z M968 845L1000 849L1040 815L1075 765L1050 800L1000 820L968 825Z" fill="#fff" />
      <path d="M370 1410L415 1420L412 1470L380 1490L392 1524H322L335 1490L362 1490Z" fill="#a8dab5" />
      <path d="M1051 190V1524" stroke="#a9c4f0" strokeWidth="1.500" opacity="0.600" />
    </g>
    <path d="M997 39V480" transform={tile("c")} stroke="#a9c4f0" strokeWidth="1.500" opacity="0.600" />
    <TileLayer data={sand} fill="#f5f0e4" />
    <TileLayer data={lakes} fill="#8ab4f8" />
    <TileLayer data={borders} fill="none" stroke="#66686c" strokeWidth="1.500" strokeLinejoin="round" />
    <TileLayer data={roads} fill="none" stroke="#fff" strokeWidth="1.900" strokeLinejoin="round" strokeLinecap="round" />
    <path d="M1516 1210L1524 1236L1514 1222M1524 1216L1536 1222L1554 1274L1550 1300M1520 1222L1550 1240" stroke="#fff" strokeWidth="4" fill="none" strokeLinejoin="round" />
    {towns.map(([t, x, y]) => <circle key={`${t}${x}`} cx={px(t, x)} cy={py(y)} r={x === 401 ? 3 : 4.6} fill="#f4f4f4" stroke="#4a4d51" strokeWidth="1.700" />)}
    {capitals.map(([t, x, y]) => (
      <g key={x}>
        <circle cx={px(t, x)} cy={py(y)} r="6" fill="#fff" stroke="#111" strokeWidth="2.200" />
        <circle cx={px(t, x)} cy={py(y)} r="3.300" fill="#111" />
      </g>
    ))}
    {labels.map((d) => <MapLabel key={d[6] + d[1]} d={d} />)}
    <text x="790" y="1320" fontSize="33" textLength="100" lengthAdjust="spacingAndGlyphs" fontFamily='Lato, "Liberation Sans", sans-serif' fontWeight="700" stroke="#fff" strokeOpacity="0.800" strokeWidth="4" paintOrder="stroke" strokeLinejoin="round">
      <tspan fill="#4285f4">G</tspan><tspan fill="#ea4335">o</tspan><tspan fill="#fbbc05">o</tspan><tspan fill="#4285f4">g</tspan><tspan fill="#34a853">l</tspan><tspan fill="#ea4335">e</tspan>
    </text>
  </MapSvg>
);

const GoogleMap = () => (
  <MapBox>
    <Terrain />
    <TypeSwitch>
      <TypeOption $w={126} $on>Map</TypeOption>
      <TypeOption $w={177}>Satellite</TypeOption>
    </TypeSwitch>
    <Pegman>
      <svg width="72" height="72" viewBox="0 0 72 72">
        <path d="M27 28H43Q46 28 46.500 31L50 44L45.500 47L43 41V63H36.500V50H34.500V63H27.500V41L25 47L21 44L24 31Q24.500 28 27 28Z" fill="#fbbc2c" stroke="#767676" strokeWidth="1.200" />
        <path d="M29 28H42L35.500 37Z" fill="#e8833a" />
        <circle cx="35" cy="18.500" r="9.300" fill="#fbbc2c" stroke="#767676" strokeWidth="1.200" />
      </svg>
    </Pegman>
    <ZoomPad>
      <svg width="72" height="146" viewBox="0 0 72 146">
        <path d="M20 36.500H52M36 20.500V52.500M20 110.500H52" stroke="#666" strokeWidth="7.500" />
        <path d="M9 73H63" stroke="#e6e6e6" strokeWidth="2" />
      </svg>
    </ZoomPad>
    <Attribution>
      <Credit $w={178}>Keyboard shortcuts</Credit>
      <Credit $w={217}>Map data ©2024 Google</Credit>
      <Credit $w={71} $end>Terms</Credit>
    </Attribution>
  </MapBox>
);

const fields = [
  { label: "Building name", star: 4, text: "Building name", ls: 0.75 },
  { label: "Branch", star: 13, text: "Branch Name", select: true, ls: 0.2 },
  { label: "Find location", text: "Find location", ls: 0.65 },
  { label: "Location", star: 4, text: "Location", ls: 0.5 },
];

export default function App() {
  return (
    <>
      <GlobalStyle />
      <Shell>
        <Sidebar>
          <MenuToggle>
            <Icon48 w={3.6}><path d="M8 13.700H40.500M8 24.400H40.500M8 35H33.500" /></Icon48>
          </MenuToggle>
          <CompanyTile><Tile><SmallCamera /></Tile></CompanyTile>
          <Nav>
            {navIcons.map((icon, i) => <NavItem key={i} $active={i === 1}>{icon}</NavItem>)}
          </Nav>
          <SideFoot>
            <Avatar><Logo s={0.325} top="#fff" a="#9fd0a0" b="#3be04f" ls={0} ls2={0} /></Avatar>
          </SideFoot>
        </Sidebar>
        <Main>
          <TopBar>
            <Logo s={1} top="#1f2c3b" a="#36ff52" b="#36ff52" ls={0.35} ls2={-0.5} />
            <TopTools>
              <Manual />
              <Language>
                <Flag />
                <LangCode>EN</LangCode>
                <Chevron w={17} h={10} sw={2.4} c="#3c4257" />
              </Language>
            </TopTools>
          </TopBar>
          <Crumbs>
            <House />
            <Slash>/</Slash>
            <CrumbText>Building Structure</CrumbText>
          </Crumbs>
          <TitleRow>
            <PageTitle>Organization setting</PageTitle>
            <GreenButton $w={213} $ls={0.95}>
              <svg width="21" height="21" viewBox="0 0 21 21" stroke="#fff" strokeWidth="3" strokeLinecap="round"><path d="M10.500 1.500V19.500M1.500 10.500H19.500" /></svg>
              Add building
            </GreenButton>
          </TitleRow>
          <Tabs>
            <Tab>Organizational structure</Tab>
            <Tab>Branch</Tab>
            <Tab $active>Combined building</Tab>
          </Tabs>
          <SearchBox>Search</SearchBox>
          <Table>
            <Cell $head>Building name</Cell>
            <Cell $head $last />
            <Cell>Combined building</Cell>
            <Cell $last><EditButton><EditIcon /></EditButton></Cell>
          </Table>
        </Main>
        <Captcha>
          <RecaptchaLogo />
          Privacy - Terms
        </Captcha>
      </Shell>
      <Backdrop>
        <Dialog>
          <DialogHead>
            <DialogTitle>Building</DialogTitle>
            <CloseIcon width="20" height="20" viewBox="0 0 20 20" stroke="#4d6069" strokeWidth="4.400" strokeLinecap="round">
              <path d="M2.500 2.500L17.500 17.500M17.500 2.500L2.500 17.500" />
            </CloseIcon>
          </DialogHead>
          <DialogBody>
            <FormGrid>
              <div>
                <PhotoDrop><BigCamera />Add Photo</PhotoDrop>
                <Hint>We Recommend an image of<br />at least 512x512 for the<br />organization</Hint>
              </div>
              <div>
                {fields.map((f) => (
                  <Field key={f.label}>
                    <Label $ls={f.ls}>{f.label}{f.star && <Star $gap={f.star}>*</Star>}</Label>
                    <Control $filled={f.select}>
                      {f.text}
                      {f.select && <Chevron w={20} h={12} sw={2.8} c="#343a40" />}
                    </Control>
                  </Field>
                ))}
              </div>
            </FormGrid>
            <GoogleMap />
          </DialogBody>
          <DialogFoot><GreenButton $w={206} $ls={0.2}>Save</GreenButton></DialogFoot>
        </Dialog>
      </Backdrop>
    </>
  );
}
